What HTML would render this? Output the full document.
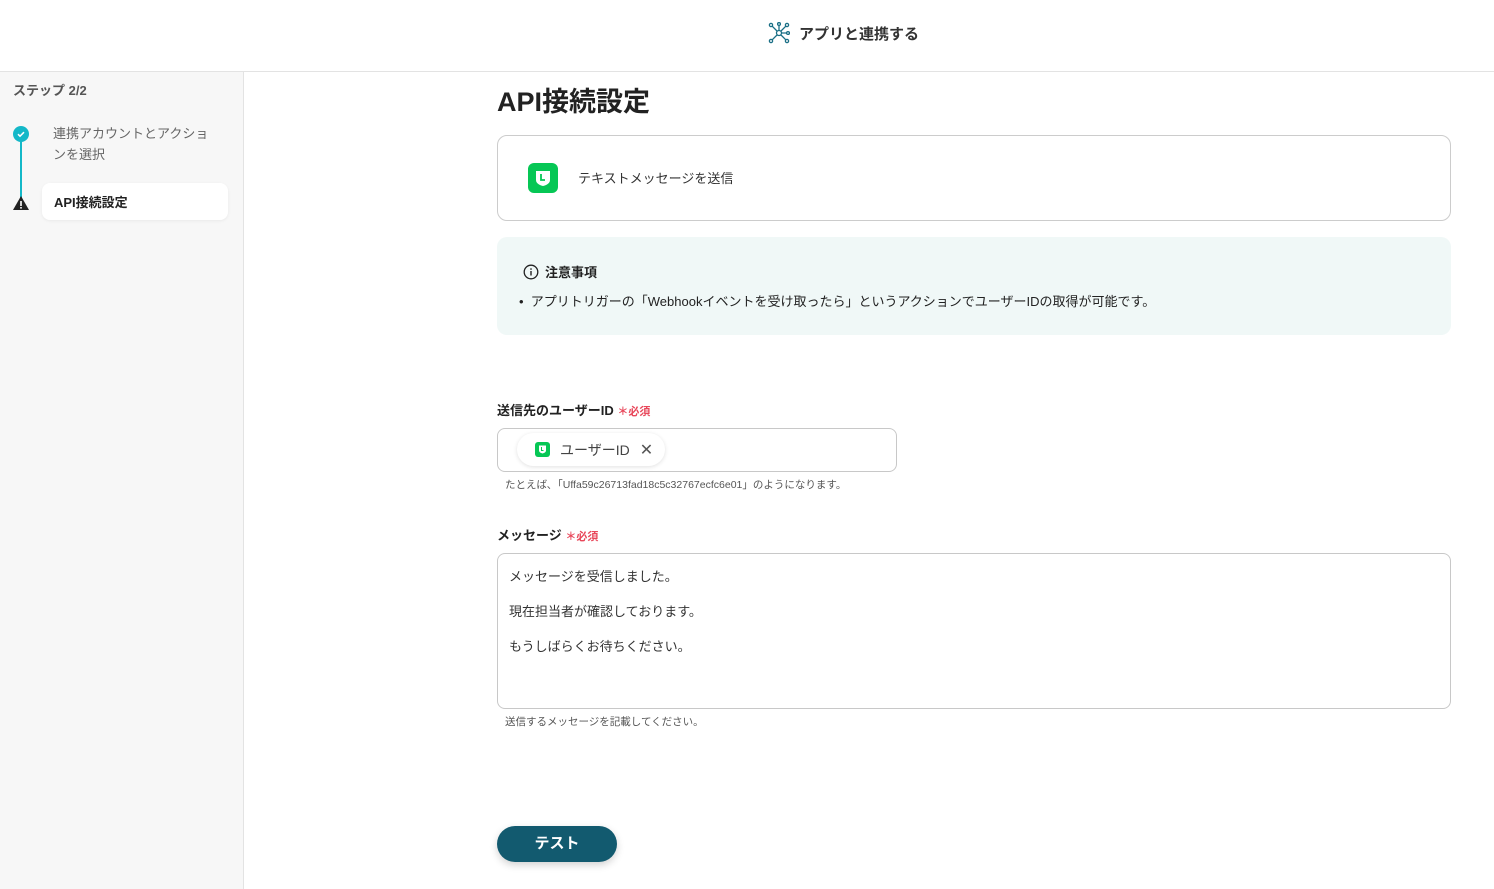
<!DOCTYPE html>
<html><head><meta charset="utf-8"><style>
*{box-sizing:border-box;margin:0;padding:0}
body{width:1494px;height:889px;overflow:hidden;background:#fff;font-family:"Liberation Sans","Noto Sans CJK JP",sans-serif;color:#222;position:relative}
.top{position:absolute;left:0;top:0;width:1494px;height:72px;border-bottom:1px solid #e3e3e3;background:#fff}
.top .t{position:absolute;left:768px;top:22px;font-size:15px;font-weight:bold;display:flex;align-items:center;gap:9px;color:#333}
.side{position:absolute;left:0;top:72px;width:244px;height:817px;background:#f7f7f7;border-right:1px solid #e3e3e3}
.abs{position:absolute}
.line{position:absolute;left:20px;top:134px;width:2px;height:68px;background:#14b8c8}
.card{position:absolute;left:497px;top:135px;width:954px;height:86px;border:1px solid #ccc;border-radius:10px}
.note{position:absolute;left:497px;top:237px;width:954px;height:98px;background:#f0f8f7;border-radius:10px}
.lbl{position:absolute;font-size:13px;font-weight:bold;color:#222}
.req{color:#e8475a;font-size:11px;font-weight:bold}
.inp{position:absolute;border:1px solid #c8c8c8;border-radius:8px}
.hint{position:absolute;font-size:10.5px;color:#555}
</style></head><body>
<div class="top"><div class="t">
<svg width="22" height="22" viewBox="0 0 22 22" fill="none" stroke="#1a6f86" stroke-width="1.3"><circle cx="11" cy="11" r="2.5"/><circle cx="3" cy="3" r="1.6"/><circle cx="19" cy="3" r="1.6"/><circle cx="3" cy="19" r="1.6"/><circle cx="19" cy="19" r="1.6"/><circle cx="11" cy="2" r="1.4"/><circle cx="20" cy="11" r="1.4"/><path d="M4.2 4.2L9 9M17.8 4.2L13 9M4.2 17.8L9 13M17.8 17.8L13 13M11 3.4V8.5M18.6 11H13.5"/></svg>
アプリと連携する</div></div>
<div class="side">
<div class="abs" style="left:13px;top:8px;font-size:13px;font-weight:bold;color:#555">ステップ 2/2</div>
</div>
<div class="line"></div>
<div class="abs" style="left:13px;top:126px;width:16px;height:16px;border-radius:50%;background:#14b8c8;"><svg width="16" height="16"><path d="M5 8.2l2 2 4-4" stroke="#fff" stroke-width="1.5" fill="none"/></svg></div>
<div class="abs" style="left:53px;top:123px;font-size:13px;line-height:21px;color:#666;width:165px">連携アカウントとアクションを選択</div>
<svg class="abs" style="left:12px;top:195px" width="18" height="16"><path d="M9 1L17 15H1Z" fill="#222"/><rect x="8.2" y="6" width="1.6" height="5" fill="#fff"/><rect x="8.2" y="12" width="1.6" height="1.6" fill="#fff"/></svg>
<div class="abs" style="left:42px;top:183px;width:186px;height:37px;background:#fff;border-radius:8px;box-shadow:0 1px 3px rgba(0,0,0,.06);font-size:13px;font-weight:bold;padding:9px 12px;color:#222">API接続設定</div>

<div class="abs" style="left:497px;top:80px;font-size:27px;font-weight:bold;color:#222">API接続設定</div>
<div class="card">
<div class="abs" style="left:30px;top:27px;width:30px;height:30px;background:#06c755;border-radius:6px"><svg width="30" height="30"><path d="M8 8h14v9c0 3-3 5-7 6c-4-1-7-3-7-6z" fill="#fff"/><path d="M13 11v6h4" stroke="#06c755" stroke-width="1.8" fill="none"/></svg></div>
<div class="abs" style="left:80px;top:32px;font-size:13px;color:#333">テキストメッセージを送信</div>
</div>
<div class="note">
<div class="abs" style="left:26px;top:25px;font-size:13px;font-weight:bold;display:flex;align-items:center;gap:6px"><svg width="16" height="16"><circle cx="8" cy="8" r="6.8" stroke="#222" stroke-width="1.3" fill="none"/><rect x="7.3" y="7" width="1.4" height="4.5" fill="#222"/><rect x="7.3" y="4.3" width="1.4" height="1.5" fill="#222"/></svg>注意事項</div>
<div class="abs" style="left:22px;top:54px;font-size:13px;color:#222">•&nbsp;&nbsp;アプリトリガーの「Webhookイベントを受け取ったら」というアクションでユーザーIDの取得が可能です。</div>
</div>

<div class="lbl" style="left:497px;top:400px">送信先のユーザーID <span class="req">＊必須</span></div>
<div class="inp" style="left:497px;top:428px;width:400px;height:44px">
<div class="abs" style="left:19px;top:4px;width:148px;height:33px;background:#fff;border-radius:17px;box-shadow:0 1px 4px rgba(0,0,0,.12);display:flex;align-items:center;padding-left:18px;gap:10px;font-size:14px;color:#444"><svg width="15" height="15"><rect width="15" height="15" rx="3" fill="#06c755"/><path d="M4 3.5h7v5c0 1.5-1.5 2.5-3.5 3c-2-.5-3.5-1.5-3.5-3z" fill="#fff"/><path d="M6.5 5v3.5h2" stroke="#06c755" stroke-width="1" fill="none"/></svg>ユーザーID <span style="font-size:16px;color:#555">✕</span></div>
</div>
<div class="hint" style="left:505px;top:477px">たとえば､「Uffa59c26713fad18c5c32767ecfc6e01」のようになります。</div>

<div class="lbl" style="left:497px;top:525px">メッセージ <span class="req">＊必須</span></div>
<div class="inp" style="left:497px;top:553px;width:954px;height:156px;padding:13px 11px;font-size:13px;color:#333">
<div style="line-height:20px">メッセージを受信しました。</div>
<div style="line-height:20px;margin-top:15px">現在担当者が確認しております。</div>
<div style="line-height:20px;margin-top:15px">もうしばらくお待ちください。</div>
</div>
<div class="hint" style="left:505px;top:714px">送信するメッセージを記載してください。</div>

<div class="abs" style="left:497px;top:826px;width:120px;height:36px;background:#125a6f;border-radius:18px;color:#fff;font-size:15px;font-weight:bold;text-align:center;line-height:36px;box-shadow:0 3px 8px rgba(0,0,0,.18)">テスト</div>
</body></html>
